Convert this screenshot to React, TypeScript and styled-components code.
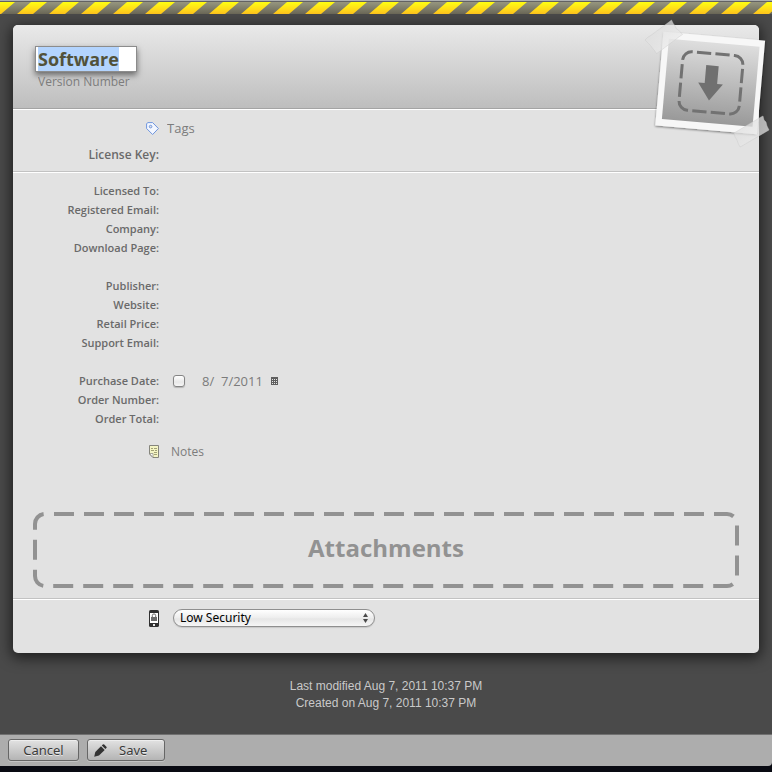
import React, { useEffect, useRef } from "react";
import styled, { createGlobalStyle, css } from "styled-components";

const GlobalStyle = createGlobalStyle`
  *, *::before, *::after { box-sizing: border-box; }
  body { margin: 0; background: #4a4a4a; font-family: "Open Sans", "Noto Sans", sans-serif; }
  button, input, select, textarea { font: inherit; color: inherit; margin: 0; padding: 0; border: 0; background: none; outline: none; }
`;

const Page = styled.div`
  display: flex;
  flex-direction: column;
  min-height: 100vh;
  background: #4a4a4a;
  color: #6a6a6a;
`;

const Hazard = styled.svg`
  display: block;
  flex: none;
  width: 100%;
  height: 14px;
`;

const Main = styled.main`
  flex: 1;
  padding: 11px 13px 0;
`;

const Card = styled.form`
  position: relative;
  display: flex;
  flex-direction: column;
  border-radius: 5px;
  background: #e2e2e2;
  box-shadow: 0 3px 14px 2px rgba(0, 0, 0, 0.6);
`;

const divider = css`
  border-bottom: 1px solid #c2c2c2;
  box-shadow: 0 1px 0 #fff;
`;

const Header = styled.header`
  display: flex;
  flex-direction: column;
  align-items: flex-start;
  height: 84px;
  padding: 21px 22px 0;
  border-radius: 5px 5px 0 0;
  background: linear-gradient(#e9e9e9, #bebebe);
  ${divider}
  border-bottom-color: #a4a4a4;
`;

const TitleInput = styled.input`
  width: 102px;
  height: 26px;
  padding: 0 2px;
  border: 1px solid #8c8c8c;
  background: #fff;
  box-shadow: 0 3px 6px rgba(0, 0, 0, 0.5);
  color: #52523a;
  font-size: 18px;
  font-weight: 700;
  line-height: 22px;
  &::selection { background: #b3d4fe; color: #52523a; }
`;

const TextInput = styled.input<{ $size?: number }>`
  width: 100%;
  min-width: 0;
  height: 19px;
  color: #7b7b7b;
  font-size: ${(p) => p.$size ?? 13}px;
  &::placeholder { color: #7c7c7c; opacity: 1; }
`;

const VersionInput = styled(TextInput)`
  width: 200px;
  padding-left: 3px;
`;

const Section = styled.section<{ $top: number; $bottom: number; $line?: boolean }>`
  padding: ${(p) => p.$top}px 0 ${(p) => p.$bottom}px;
  ${(p) => p.$line && divider}
`;

const Row = styled.div<{ $height?: number; $gap?: number }>`
  display: grid;
  grid-template-columns: 146px minmax(0, 1fr);
  align-items: center;
  column-gap: ${(p) => p.$gap ?? 14}px;
  height: ${(p) => p.$height ?? 19}px;
  padding-right: 20px;
`;

const Label = styled.label<{ $size?: number }>`
  text-align: right;
  font-size: ${(p) => p.$size ?? 11}px;
  font-weight: 600;
  line-height: 19px;
  white-space: nowrap;
`;

const IconLabel = styled.label`
  display: flex;
  justify-content: flex-end;
  svg { display: block; }
`;

const Group = styled.div`
  & + & { margin-top: 19px; }
`;

const NotesArea = styled.div`
  padding: 12px 0 50px;
`;

const DateBox = styled.div`
  display: flex;
  align-items: center;
`;

const Check = styled.input`
  appearance: none;
  width: 12px;
  height: 12px;
  border: 1px solid #858585;
  border-radius: 3px;
  background: linear-gradient(#fff, #e8e8e8 60%, #f6f6f6);
  box-shadow: 0 1px 1px rgba(0, 0, 0, 0.2);
`;

const DateInput = styled(TextInput)`
  width: 69px;
  margin-left: 17px;
`;

const CalendarButton = styled.button`
  display: block;
  svg { display: block; }
`;

const Attachments = styled.button`
  display: grid;
  width: calc(100% - 40px);
  height: 76px;
  margin: 0 20px;
  color: #929292;
  font-size: 24px;
  font-weight: 700;
  & > * { grid-area: 1 / 1; }
  span { align-self: center; padding-bottom: 4px; line-height: 34px; }
`;

const DashFrame = styled.svg`
  display: block;
  width: 100%;
  height: 76px;
  rect {
    width: calc(100% - 4px);
    fill: none;
    stroke: #929292;
    stroke-width: 4;
    stroke-dasharray: 20 10;
    stroke-dashoffset: -9;
  }
`;

const SelectBox = styled.div`
  position: relative;
  width: 202px;
  svg { position: absolute; right: 6px; top: 4px; pointer-events: none; }
`;

const Select = styled.select`
  appearance: none;
  display: block;
  width: 100%;
  height: 18px;
  padding: 0 20px 0 6px;
  border: 1px solid #8f8f8f;
  border-radius: 9px;
  background: linear-gradient(#fff, #ededed 50%, #e6e6e6 55%, #f6f6f6);
  box-shadow: 0 1px 1px rgba(0, 0, 0, 0.12);
  color: #000;
  font-family: "Noto Sans", "Open Sans", sans-serif;
  font-size: 12px;
  line-height: 16px;
`;

const Photo = styled.button`
  position: absolute;
  top: -9px;
  right: -13px;
  width: 130px;
  height: 136px;
  svg { display: block; }
`;

const Stamps = styled.footer`
  padding: 25px 0 16px;
  color: #c9c9c9;
  font: 12px/17px "Liberation Sans", Arial, sans-serif;
  text-align: center;
  p { margin: 0; }
`;

const Toolbar = styled.div`
  display: flex;
  gap: 8px;
  height: 32px;
  padding: 4px 8px 0;
  border-top: 1px solid #707070;
  border-radius: 0 0 4px 0;
  background: #adadad;
`;

const Desktop = styled.div`
  padding-bottom: 6px;
  background: #090a12;
`;

const ToolButton = styled.button<{ $width: number; $icon?: boolean }>`
  display: flex;
  align-items: center;
  justify-content: ${(p) => (p.$icon ? "flex-start" : "center")};
  gap: 12px;
  width: ${(p) => p.$width}px;
  height: 22px;
  padding-left: ${(p) => (p.$icon ? 6 : 0)}px;
  border: 1px solid #666;
  border-radius: 3px;
  background: linear-gradient(#e2e2e2, #b4b4b4);
  box-shadow: inset 0 1px 0 #eee, 0 1px 0 #c4c4c4;
  color: #3a3a3a;
  font-family: "Noto Sans", "Open Sans", sans-serif;
  font-size: 13px;
  line-height: 18px;
  text-shadow: 0 1px 0 #e8e8e8;
`;

const HazardTape = () => (
  <Hazard aria-hidden="true">
    <defs>
      <linearGradient id="amber" x1="0" y1="0" x2="0" y2="1">
        <stop offset="0" stopColor="#ffff12" />
        <stop offset="1" stopColor="#ffc41e" />
      </linearGradient>
      <linearGradient id="olive" x1="0" y1="0" x2="0" y2="1">
        <stop offset="0" stopColor="#96967f" />
        <stop offset="1" stopColor="#6b6858" />
      </linearGradient>
      <pattern id="stripes" width="32" height="14" patternUnits="userSpaceOnUse">
        <rect y="2" width="32" height="12" fill="url(#olive)" />
        <path d="M-1 2h16l-14 12h-16z M31 2h16l-14 12h-16z" fill="url(#amber)" />
        <rect width="32" height="1" fill="#adb0b0" />
        <rect y="1" width="32" height="1" fill="#626262" />
      </pattern>
    </defs>
    <rect width="100%" height="14" fill="url(#stripes)" />
  </Hazard>
);

const TagIcon = () => (
  <svg width="13" height="13" viewBox="0 0 13 13">
    <path d="M.6 1.6 2 .6h4.6l5.8 5.9-5.8 6-6-6z" fill="#f3f7ff" stroke="#6f95dd" />
    <circle cx="4.6" cy="4.6" r="1.3" fill="#e2e2e2" stroke="#6f95dd" />
  </svg>
);

const NoteIcon = () => (
  <svg width="10" height="13" viewBox="0 0 10 13">
    <path d="M.5.5h9v12H4L.5 9z" fill="#f4f4c4" stroke="#85857c" />
    <path d="M2 3.5h2m1 0h3M2 5.5h3m1 0h2M5 7.5h3M5 9.5h3" stroke="#a2a276" />
    <path d="M.5 8.5H4v4z" fill="#fff" stroke="#85857c" strokeWidth=".7" />
  </svg>
);

const PhoneIcon = () => (
  <svg width="10" height="17" viewBox="0 0 10 17">
    <rect width="10" height="17" rx="1.6" fill="#303030" />
    <rect x="1" y="3" width="8" height="10" fill="#fff" />
    <rect x="2" y="7" width="6" height="4" fill="#6c6c6c" />
    <path d="M3.3 7V5.6a1.7 1.7 0 0 1 3.4 0V7" fill="none" stroke="#6c6c6c" />
    <rect x="4" y="14" width="2" height="2" fill="#e8e8e8" />
  </svg>
);

const CalendarIcon = () => (
  <svg width="7" height="8" viewBox="0 0 7 8">
    <rect width="7" height="8" fill="#5f5f5f" />
    <path d="M1 2.5h1m1 0h1m1 0h1M1 4.5h1m1 0h1m1 0h1M1 6.5h1m1 0h1m1 0h1" stroke="#e6e6e6" />
  </svg>
);

const PencilIcon = () => (
  <svg width="13" height="13" viewBox="0 0 13 13">
    <path d="M.2 12.7 1.3 8 7 2.2l3.7 3.7L5 11.5z" fill="#333" />
    <path d="m7.8 1.6 1-1q.7-.7 1.4 0l2.2 2.2q.6.7 0 1.3l-1 1z" fill="#333" />
  </svg>
);

const DropPhoto = () => (
  <svg width="130" height="136" viewBox="0 0 130 136">
    <defs>
      <linearGradient id="print" x1="0" y1="0" x2="0" y2="1">
        <stop offset="0" stopColor="#dedede" />
        <stop offset="1" stopColor="#999" />
      </linearGradient>
      <linearGradient id="tape" x1="0" y1="0" x2="1" y2="1">
        <stop offset="0" stopColor="#d8d8d8" stopOpacity=".75" />
        <stop offset="1" stopColor="#f0f0f0" stopOpacity=".7" />
      </linearGradient>
      <filter id="lift" x="-10%" y="-10%" width="120%" height="120%">
        <feDropShadow dx="0" dy="1" stdDeviation="1.3" floodOpacity=".5" />
      </filter>
    </defs>
    <g transform="translate(68.2 67) rotate(5)">
      <rect x="-51" y="-47" width="102" height="94" fill="#f7f7f7" filter="url(#lift)" />
      <rect x="-45" y="-40.5" width="91" height="80.5" fill="url(#print)" />
      <rect
        x="-29.5" y="-29.5" width="60.5" height="58.6" rx="9" pathLength="240"
        fill="none" stroke="#727272" strokeWidth="3" strokeDasharray="15.4 4.6" strokeDashoffset="-5"
      />
      <path d="M-5.5-17.5H7V.5h5.8L.3 17.5-12 .5h6.5z" fill="#707070" />
    </g>
    <path
      d="m3 24 3-3 2-1 19-14 2.5-2 2 4 1 1 2 4 2 1 4 4.5-3 2-20 15-3 2-2-3-1-1-3-4-2-2z"
      fill="url(#tape)" stroke="#c8c8c8" strokeOpacity=".5" strokeWidth=".8"
    />
    <path
      d="m92 117 27-16 2-1 1 4 2 2 1 4 2 4-27 16-2 1-2-4-1-3-2-3z"
      fill="url(#tape)" stroke="#c8c8c8" strokeOpacity=".5" strokeWidth=".8"
    />
  </svg>
);

const groups = [
  ["Licensed To", "Registered Email", "Company", "Download Page"],
  ["Publisher", "Website", "Retail Price", "Support Email"],
];

const toId = (name: string) => name.toLowerCase().replace(/ /g, "-");

const Field = ({ name, height, size }: { name: string; height?: number; size?: number }) => (
  <Row $height={height}>
    <Label htmlFor={toId(name)} $size={size}>{name}:</Label>
    <TextInput id={toId(name)} />
  </Row>
);

export default function App() {
  const title = useRef<HTMLInputElement>(null);

  useEffect(() => {
    title.current?.focus();
    title.current?.select();
  }, []);

  return (
    <Page>
      <GlobalStyle />
      <HazardTape />
      <Main>
        <Card id="record" onSubmit={(e) => e.preventDefault()}>
          <Header>
            <TitleInput ref={title} aria-label="Title" defaultValue="Software" spellCheck={false} />
            <VersionInput $size={12} aria-label="Version Number" placeholder="Version Number" />
          </Header>

          <Section $top={9} $bottom={7} $line>
            <Row $height={20} $gap={8}>
              <IconLabel htmlFor="tags" aria-label="Tags"><TagIcon /></IconLabel>
              <TextInput id="tags" placeholder="Tags" />
            </Row>
            <Row $height={6} aria-hidden="true" />
            <Field name="License Key" height={20} size={12} />
          </Section>

          <Section $top={9} $bottom={10} $line>
            {groups.map((names) => (
              <Group key={names[0]}>
                {names.map((name) => <Field key={name} name={name} />)}
              </Group>
            ))}
            <Group>
              <Row>
                <Label htmlFor="purchase-date">Purchase Date:</Label>
                <DateBox>
                  <Check type="checkbox" aria-label="Set purchase date" />
                  <DateInput id="purchase-date" defaultValue="8/  7/2011" />
                  <CalendarButton type="button" aria-label="Choose date"><CalendarIcon /></CalendarButton>
                </DateBox>
              </Row>
              <Field name="Order Number" />
              <Field name="Order Total" />
            </Group>
            <NotesArea>
              <Row $height={22} $gap={12}>
                <IconLabel htmlFor="notes" aria-label="Notes"><NoteIcon /></IconLabel>
                <TextInput id="notes" placeholder="Notes" $size={12} />
              </Row>
            </NotesArea>
            <Attachments type="button">
              <DashFrame aria-hidden="true"><rect x="2" y="2" height="72" rx="10" /></DashFrame>
              <span>Attachments</span>
            </Attachments>
          </Section>

          <Section $top={10} $bottom={26}>
            <Row $height={18}>
              <IconLabel htmlFor="security" aria-label="Security"><PhoneIcon /></IconLabel>
              <SelectBox>
                <Select id="security" defaultValue="low">
                  <option value="low">Low Security</option>
                </Select>
                <svg width="7" height="10" viewBox="0 0 7 10" aria-hidden="true">
                  <path d="M3.5 0 6 4H1zM3.5 10 1 6h5z" fill="#4a4a4a" />
                </svg>
              </SelectBox>
            </Row>
          </Section>

          <Photo type="button" aria-label="Drop a picture"><DropPhoto /></Photo>
        </Card>
        <Stamps>
          <p>Last modified Aug 7, 2011 10:37 PM</p>
          <p>Created on Aug 7, 2011 10:37 PM</p>
        </Stamps>
      </Main>
      <Desktop>
        <Toolbar>
          <ToolButton type="button" $width={71}>Cancel</ToolButton>
          <ToolButton type="submit" form="record" $width={78} $icon><PencilIcon />Save</ToolButton>
        </Toolbar>
      </Desktop>
    </Page>
  );
}
